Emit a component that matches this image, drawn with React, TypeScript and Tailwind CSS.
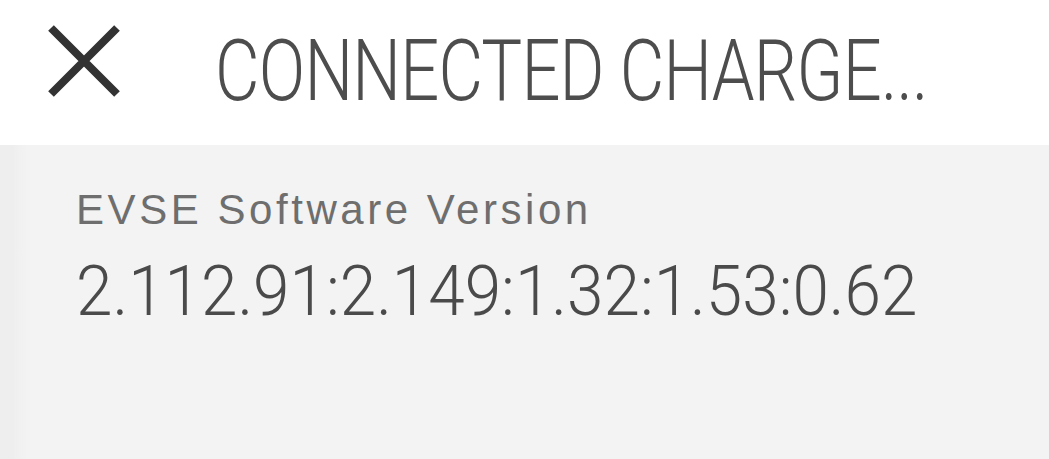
export default function App() {
  return (
    <div className="w-[1049px] h-[459px] flex flex-col bg-white overflow-hidden" style={{ fontFamily: '"Liberation Sans", Arial, sans-serif' }}>
      <header className="h-[145px] shrink-0 bg-white flex items-start">
        <svg className="ml-[48px] mt-[25px] shrink-0" width="72" height="72" viewBox="0 0 72 72">
          <path d="M3 3 L69 69 M69 3 L3 69" stroke="#333333" strokeWidth="8" strokeLinecap="butt" />
        </svg>
        <div className="ml-[95px] mt-[29px] h-[85px] leading-[85px] text-[85px] text-[#4d4d4d] whitespace-nowrap origin-left scale-x-[0.807] tracking-[-1px] font-[Roboto,_'Liberation_Sans',_sans-serif] font-light">
          CONNECTED CHARGE...
        </div>
      </header>
      <main className="flex-1 flex bg-[#f3f3f3]">
        <div className="w-[14px] shrink-0 bg-[#eeeeee]" />
        <div className="w-[13px] shrink-0 bg-gradient-to-r from-[#efefef] to-[#f3f3f3]" />
        <div className="flex flex-col pl-[49px] pt-[44px]">
          <div className="text-[42px] leading-[42px] h-[42px] text-[#6e6e6e] tracking-[3.55px] whitespace-nowrap">EVSE Software Version</div>
          <div className="mt-[25px] text-[70px] leading-[70px] h-[70px] text-[#4a4a4a] whitespace-nowrap origin-left scale-x-[0.938] font-[Roboto,_'Liberation_Sans',_sans-serif] font-light">2.112.91:2.149:1.32:1.53:0.62</div>
        </div>
      </main>
    </div>
  );
}
